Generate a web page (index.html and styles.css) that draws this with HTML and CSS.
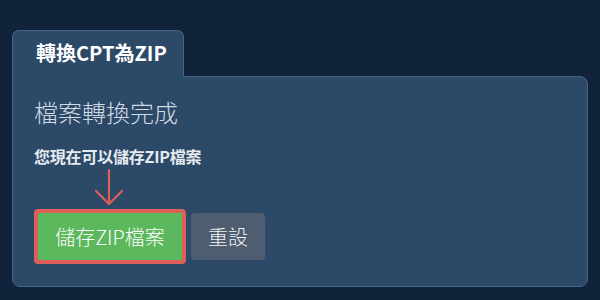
FILE: index.html
```html
<!DOCTYPE html>
<html lang="zh-Hant">
<head>
<meta charset="utf-8">
<link rel="stylesheet" href="styles.css">
</head>
<body>
<div class="widget">
  <div class="tab">轉換CPT為ZIP</div>
  <div class="panel">
    <h2 class="status">檔案轉換完成</h2>
    <p class="hint">您現在可以儲存ZIP檔案</p>
    <div class="actions">
      <div class="highlight-group">
        <svg class="arrow" width="30" height="42" viewBox="0 0 30 42">
          <path d="M15 3 V37 M2 24 L15 37 L28 24" fill="none" stroke="#dd5f59" stroke-width="2.2" stroke-linecap="round" stroke-linejoin="round"/>
        </svg>
        <div class="highlight">
          <button class="btn btn-save">儲存ZIP檔案</button>
        </div>
      </div>
      <button class="btn btn-reset">重設</button>
    </div>
  </div>
</div>
</body>
</html>
```

FILE: styles.css
```css
html, body {
  margin: 0;
  padding: 0;
}
body {
  background: #10233a;
  width: 600px;
  height: 300px;
  box-sizing: border-box;
  padding: 30px 12px 0 12px;
  font-family: "Noto Sans CJK TC", "Noto Sans", sans-serif;
  overflow: hidden;
}
.widget {
  display: flex;
  flex-direction: column;
  align-items: flex-start;
}
.tab {
  position: relative;
  z-index: 1;
  background: #2c4968;
  border: 1px solid #4a6686;
  border-bottom: none;
  border-radius: 7px 7px 0 0;
  padding: 9px 23px 11px 23px;
  margin-bottom: -1px;
  font-size: 20px;
  line-height: 26px;
  font-weight: 700;
  color: #ffffff;
  width: 124px;
  white-space: nowrap;
}
.panel {
  align-self: stretch;
  background: #2c4968;
  border: 1px solid #4a6686;
  border-radius: 0 8px 8px 8px;
  padding: 19px 21px 19px 21px;
  height: 171px;
}
.status {
  margin: 0;
  font-size: 24px;
  line-height: 32px;
  font-weight: 300;
  color: #d2dae3;
}
.hint {
  margin: 17px 0 0 0;
  font-size: 16px;
  line-height: 22px;
  font-weight: 700;
  color: #e6ebf0;
  letter-spacing: -0.2px;
}
.actions {
  display: flex;
  align-items: flex-end;
  gap: 5px;
}
.highlight-group {
  display: flex;
  flex-direction: column;
  align-items: center;
}
.arrow {
  display: block;
  margin-left: -2px;
}
.highlight {
  border: 4px solid #dd5f59;
  border-radius: 4px;
  display: flex;
}
.btn {
  font-family: "Noto Sans CJK TC", "Noto Sans", sans-serif;
  font-size: 20px;
  line-height: 27px;
  font-weight: 300;
  padding: 10px 17px;
  border: none;
  border-radius: 3px;
  color: #ffffff;
  white-space: nowrap;
}
.btn-save {
  background: #5cb85c;
  width: 144px;
  height: 47px;
  border-radius: 0;
}
.btn-reset {
  background: #4e5e70;
  color: #eef1f4;
  width: 74px;
  height: 47px;
  border-radius: 4px;
  margin-bottom: 4px;
}
```
